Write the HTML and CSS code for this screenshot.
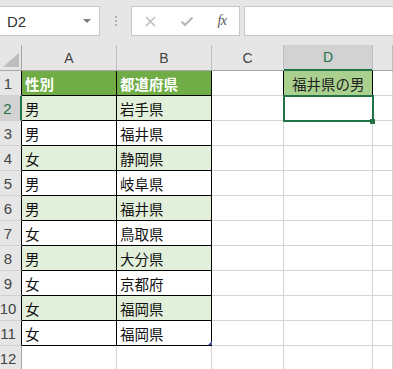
FILE: index.html
```html
<!DOCTYPE html>
<html lang="ja">
<head>
<meta charset="utf-8">
<link rel="stylesheet" href="styles.css">
</head>
<body>
<div class="fbar">
  <div class="namebox"><span>D2</span><span class="caret"></span></div>
  <div class="grip"><i></i><i></i><i></i></div>
  <div class="fbtns">
    <span class="slot"><svg width="11" height="11" viewBox="0 0 11 11"><path d="M1 1L10 10M10 1L1 10" stroke="#b8b8b8" stroke-width="1.4" fill="none"/></svg></span>
    <span class="slot"><svg width="14" height="11" viewBox="0 0 14 11"><path d="M1.5 5.5L5 9L12.5 1.5" stroke="#b8b8b8" stroke-width="2.2" fill="none"/></svg></span>
    <span class="slot fx">fx</span>
  </div>
  <div class="finput"></div>
</div>
<div class="sheet">
  <div class="c corner"></div><div class="c ch">A</div><div class="c ch">B</div><div class="c ch">C</div><div class="c ch chsel">D</div><div class="c ch"></div>

  <div class="c rh t">1</div><div class="c t hd">性別</div><div class="c t hd">都道府県</div><div class="c bl"></div><div class="c d1">福井県の男</div><div class="c"></div>
  <div class="c rh rhsel">2</div><div class="c t alt">男</div><div class="c t alt">岩手県</div><div class="c"></div><div class="c active"></div><div class="c"></div>
  <div class="c rh t">3</div><div class="c t">男</div><div class="c t">福井県</div><div class="c"></div><div class="c"></div><div class="c"></div>
  <div class="c rh t">4</div><div class="c t alt">女</div><div class="c t alt">静岡県</div><div class="c"></div><div class="c"></div><div class="c"></div>
  <div class="c rh t">5</div><div class="c t">男</div><div class="c t">岐阜県</div><div class="c"></div><div class="c"></div><div class="c"></div>
  <div class="c rh t">6</div><div class="c t alt">男</div><div class="c t alt">福井県</div><div class="c"></div><div class="c"></div><div class="c"></div>
  <div class="c rh t">7</div><div class="c t">女</div><div class="c t">鳥取県</div><div class="c"></div><div class="c"></div><div class="c"></div>
  <div class="c rh t">8</div><div class="c t alt">男</div><div class="c t alt">大分県</div><div class="c"></div><div class="c"></div><div class="c"></div>
  <div class="c rh t">9</div><div class="c t">女</div><div class="c t">京都府</div><div class="c"></div><div class="c"></div><div class="c"></div>
  <div class="c rh t">10</div><div class="c t alt">女</div><div class="c t alt">福岡県</div><div class="c"></div><div class="c"></div><div class="c"></div>
  <div class="c rh t">11</div><div class="c t">女</div><div class="c t tend">福岡県</div><div class="c"></div><div class="c"></div><div class="c"></div>
  <div class="c rh">12</div><div class="c"></div><div class="c"></div><div class="c"></div><div class="c"></div><div class="c"></div>
</div>
</body>
</html>
```
FILE: styles.css
```css
html, body {
  margin: 0;
  padding: 0;
}
body {
  width: 393px;
  height: 369px;
  overflow: hidden;
  background: #fff;
  font-family: "Liberation Sans", Arial, sans-serif;
}
.fbar {
  height: 45px;
  box-sizing: border-box;
  padding-top: 6px;
  background: #e6e6e6;
  display: flex;
  align-items: flex-start;
}
.namebox {
  width: 100px;
  height: 30px;
  box-sizing: border-box;
  background: #fff;
  border: 1px solid #c6c6c6;
  border-left: none;
  display: flex;
  align-items: center;
  justify-content: space-between;
  padding: 0 8px 0 7px;
  font-size: 15px;
  color: #333;
}
.caret {
  width: 0;
  height: 0;
  border-left: 4px solid transparent;
  border-right: 4px solid transparent;
  border-top: 4px solid #7a7a7a;
}
.grip {
  width: 31px;
  height: 30px;
  display: flex;
  flex-direction: column;
  align-items: center;
  justify-content: center;
  gap: 2px;
}
.grip i {
  width: 2px;
  height: 2px;
  background: #b0b0b0;
}
.fbtns {
  width: 109px;
  height: 30px;
  box-sizing: border-box;
  background: #fff;
  border: 1px solid #c6c6c6;
  display: flex;
  align-items: center;
}
.slot {
  width: 37px;
  display: flex;
  justify-content: center;
  align-items: center;
}
.slot:first-child { width: 36px; }
.slot.fx {
  width: 34px;
  font-family: "Liberation Serif", serif;
  font-style: italic;
  font-size: 14px;
  color: #555;
  letter-spacing: -0.5px;
}
.finput {
  flex: 1;
  margin-left: 4px;
  height: 30px;
  box-sizing: border-box;
  background: #fff;
  border: 1px solid #c6c6c6;
  border-right: none;
}
.sheet {
  display: grid;
  grid-template-columns: 22px 95px 95px 72px 89px 20px;
  grid-template-rows: 26px repeat(12, 25px);
}
.c {
  box-sizing: border-box;
  border-right: 1px solid #d4d4d4;
  border-bottom: 1px solid #d4d4d4;
  display: flex;
  align-items: center;
  padding: 1px 0 0 3px;
  font-family: "Noto Sans CJK JP", sans-serif;
  font-size: 14.5px;
  color: #111;
  white-space: nowrap;
  overflow: visible;
  position: relative;
}
.ch {
  background: #e6e6e6;
  border-right-color: #bdbdbd;
  border-bottom-color: #a6a6a6;
  justify-content: center;
  padding: 0;
  font-family: "Liberation Sans", Arial, sans-serif;
  font-size: 14px;
  color: #444;
}
.chsel {
  background: #d2d2d2;
  color: #217346;
  border-bottom: 2px solid #217346;
}
.corner {
  background: #e6e6e6;
  border-right-color: #a6a6a6;
  border-bottom-color: #a6a6a6;
}
.corner::after {
  content: "";
  position: absolute;
  right: 2px;
  bottom: 3px;
  width: 16px;
  height: 14px;
  background: #bdbdbd;
  clip-path: polygon(100% 0, 100% 100%, 0 100%);
}
.rh {
  background: #e6e6e6;
  border-right-color: #a6a6a6;
  border-bottom-color: #d0d0d0;
  justify-content: center;
  padding: 1px 5px 0 0;
  font-family: "Liberation Sans", Arial, sans-serif;
  font-size: 15px;
  color: #444;
}
.rh.t {
  border-right-color: #000;
}
.rhsel {
  background: #d2d2d2;
  color: #217346;
  border-right: 2px solid #217346;
}
.t:not(.rh) {
  border-right-color: #000;
  border-bottom-color: #000;
}
.hd {
  background: #70ad47;
  color: #fff;
  font-weight: bold;
}
.alt {
  background: #e2efda;
}
.bl {
  border-right-color: #000;
}
.d1 {
  background: #a9d08e;
  border-right-color: #000;
  color: #222;
  padding-left: 8px;
}
.active {
  outline: 2px solid #217346;
  outline-offset: -1px;
  z-index: 1;
}
.active::after {
  content: "";
  position: absolute;
  right: -3px;
  bottom: -4px;
  width: 5px;
  height: 5px;
  background: #217346;
}
.tend::after {
  content: "";
  position: absolute;
  right: -1px;
  bottom: 0;
  width: 4px;
  height: 4px;
  background: #3f51a0;
  clip-path: polygon(100% 0, 100% 100%, 0 100%);
}
```
